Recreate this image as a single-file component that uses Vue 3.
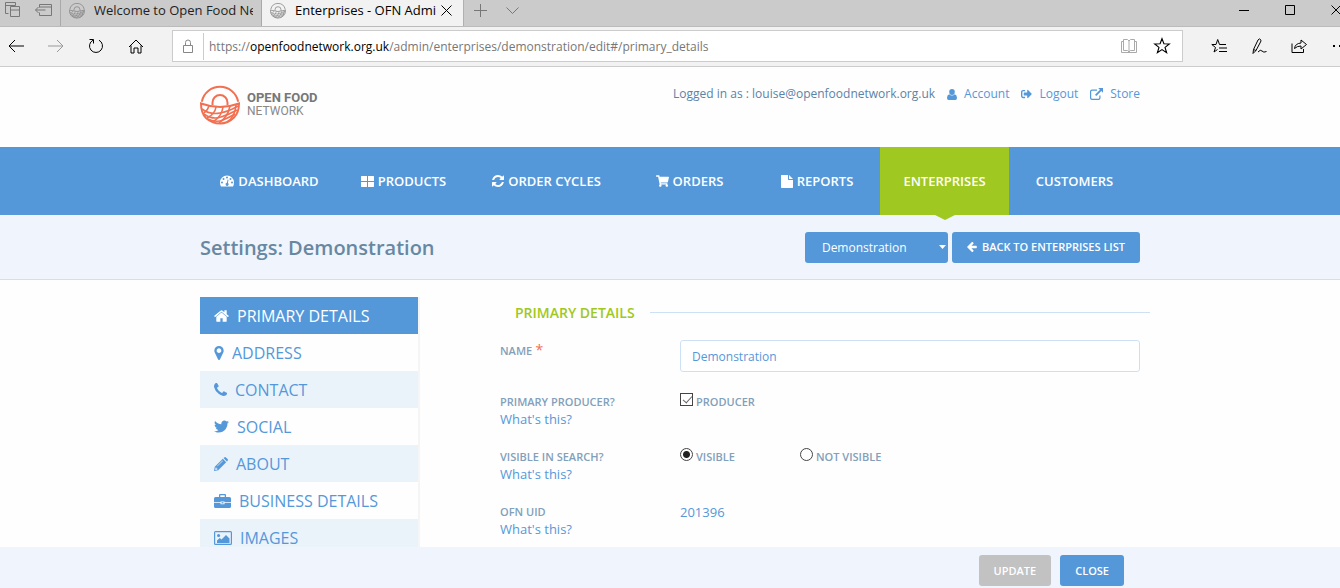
<script setup>
import { ref } from 'vue'

const P = {
  home: { w: 15, h: 12, box: '0 250 1664 1290', d: 'M1408 992v480q0 26-19 45t-45 19h-384v-384h-256v384h-384q-26 0-45-19t-19-45v-480q0-1 .5-3t.5-3l575-474 575 474q1 2 1 6zm223-69l-62 74q-8 9-21 11h-3q-13 0-21-7l-692-577-692 577q-12 8-24 7-13-2-21-11l-62-74q-8-10-7-23.500t11-21.500l719-599q32-26 76-26t76 26l244 204v-195q0-14 9-23t23-9h192q14 0 23 9t9 23v408l219 182q10 8 11 21.500t-7 23.500z' },
  marker: { w: 10, h: 14, box: '0 128 1024 1536', d: 'M768 640q0-106-75-181t-181-75-181 75-75 181 75 181 181 75 181-75 75-181zm256 0q0 109-33 179l-364 774q-16 33-47.500 52t-67.500 19-67.500-19-46.500-52l-365-774q-33-70-33-179 0-212 150-362t362-150 362 150 150 362z' },
  phone: { w: 13, h: 13, box: '0 128 1408 1408', d: 'M1408 1240q0 27-10 70.5t-21 68.500q-21 50-122 106-94 51-186 51-27 0-52.500-3.500t-57.500-12.500-47.500-14.500-55.500-20.500-49-18q-98-35-175-83-128-79-264.500-215.500t-215.500-264.500q-48-77-83-175-3-9-18-49t-20.500-55.500-14.500-47.500-12.500-57.500-3.500-52.500q0-92 51-186 56-101 106-122 25-11 68.500-21t70.500-10q14 0 21 3 18 6 53 76 11 19 30 54t35 63.500 31 53.500q3 4 17.500 25t21.500 35.500 7 28.500q0 20-28.500 50t-62 55-62 53-28.500 46q0 9 5 22.500t8.500 20.500 14 24 11.500 19q76 137 174 235t235 174q2 1 19 11.500t24 14 20.500 8.500 22.500 5q18 0 46-28.500t53-62 55-62 50-28.500q14 0 28.500 7t35.500 21.500 25 17.500q25 15 53.500 31t63.500 35 54 30q70 35 76 53 3 7 3 21z' },
  twitter: { w: 15, h: 13, box: '0 40 512 430', d: 'M459.37 151.716c.325 4.548.325 9.097.325 13.645 0 138.72-105.583 298.558-298.558 298.558-59.452 0-114.68-17.219-161.137-47.106 8.447.974 16.568 1.299 25.34 1.299 49.055 0 94.213-16.568 130.274-44.832-46.132-.975-84.792-31.188-98.112-72.772 6.498.974 12.995 1.624 19.818 1.624 9.421 0 18.843-1.3 27.614-3.573-48.081-9.747-84.143-51.98-84.143-102.985v-1.299c13.969 7.797 30.214 12.67 47.431 13.319-28.264-18.843-46.781-51.005-46.781-87.391 0-19.492 5.197-37.36 14.294-52.954 51.655 63.675 129.3 105.258 216.365 109.807-1.624-7.797-2.599-15.918-2.599-24.04 0-57.828 46.782-104.934 104.934-104.934 30.213 0 57.502 12.67 76.67 33.137 23.715-4.548 46.456-13.32 66.599-25.34-7.798 24.366-24.366 44.833-46.132 57.827 21.117-2.273 41.584-8.122 60.426-16.243-14.292 20.791-32.161 39.308-52.628 54.253z' },
  pencil: { w: 14, h: 14, box: '0 0 14 14', d: 'M8.800 1.800l3.400 3.400-8 8L0 14l.8-4.200zM9.500 1.100L10.300.4q.8-.7 1.600 0l1.700 1.700q.7.800 0 1.600l-.7.800zM1.600 10.500l-.4 2.200.2.200 2-.5v-.9h-1v-1zM8.500 3.500l-5.400 5.400.4.400 5.400-5.400z' },
  briefcase: { w: 17, h: 14, box: '0 0 17 14', d: 'M5 3V1q0-1 1-1h5q1 0 1 1v2h3.500Q17 3 17 4.500V8.300h-6.500V7.500h-4v.8H0V4.500Q0 3 1.500 3zM6.300 3h4.400V1.300H6.300zM0 9h6.500v1.300h4V9H17v3.500q0 1.500-1.500 1.500h-14Q0 14 0 12.500zM7.500 8.300h2v1.200h-2z' },
  image: { w: 18, h: 14, box: '0 0 18 14', d: 'M1.500 0h15Q18 0 18 1.500v11q0 1.500-1.500 1.500h-15Q0 14 0 12.500v-11Q0 0 1.500 0zM1.200 1.200v11.600h15.600V1.200zM3 12V9.500L5.800 7l1.700 1.600L12 4l3.500 3.600V12zM6.200 4.500a1.600 1.600 0 1 1-3.200 0 1.600 1.600 0 0 1 3.200 0z' },
  gauge: { w: 14, h: 12, box: '0 0 14 12', d: 'M7 .5a7 7 0 0 0-7 7q0 2.200 1 4h12q1-1.800 1-4a7 7 0 0 0-7-7zM7 1.500a1 1 0 1 1 0 2 1 1 0 0 1 0-2zM3.500 3a1 1 0 1 1 0 2 1 1 0 0 1 0-2zM2 6.500a1 1 0 1 1 0 2 1 1 0 0 1 0-2zM12 6.500a1 1 0 1 1 0 2 1 1 0 0 1 0-2zM10.500 3a1 1 0 1 1 0 2 1 1 0 0 1 0-2zM7.600 4.500l.9.200L7.900 8a1.500 1.500 0 1 1-1-.2z' },
  grid: { w: 13, h: 11, box: '0 0 13 11', d: 'M.5 0h5.500v5H0V.5zM7 0h5.500l.5.500V5H7zM0 6h6v5H.5l-.5-.5zM7 6h6v4.500l-.5.500H7z' },
  refresh: { w: 12, h: 12, box: '0 0 1536 1536', d: 'M1511 928q0 5-1 7-64 268-268 434.500t-478 166.500q-146 0-282.500-55t-243.500-157l-129 129q-19 19-45 19t-45-19-19-45v-448q0-26 19-45t45-19h448q26 0 45 19t19 45-19 45l-137 137q71 66 161 102t187 36q134 0 250-65t186-179q11-17 53-117 8-23 30-23h192q13 0 22.500 9.500t9.500 22.500zm25-800v448q0 26-19 45t-45 19h-448q-26 0-45-19t-19-45 19-45l138-138q-148-137-349-137-134 0-250 65t-186 179q-11 17-53 117-8 23-30 23h-199q-13 0-22.500-9.500t-9.500-22.500v-7q65-268 270-434.500t480-166.500q146 0 284 55.500t245 156.500l130-129q19-19 45-19t45 19 19 45z' },
  cart: { w: 13, h: 12, box: '0 0 576 512', d: 'M528.12 301.319l47.273-208C578.806 78.301 567.391 64 551.99 64H159.208l-9.166-44.81C147.758 8.021 137.930 0 126.529 0H24C10.745 0 0 10.745 0 24v16c0 13.255 10.745 24 24 24h69.883l70.248 343.435C147.325 417.100 136 435.222 136 456c0 30.928 25.072 56 56 56s56-25.072 56-56c0-15.674-6.447-29.835-16.824-40h209.647C430.447 426.165 424 440.326 424 456c0 30.928 25.072 56 56 56s56-25.072 56-56c0-22.172-12.888-41.332-31.579-50.405l5.517-24.276c3.413-15.018-8.002-29.319-23.403-29.319H218.117l-6.545-32h293.145c11.206 0 20.920-7.754 23.403-18.681z' },
  file: { w: 12, h: 13, box: '0 0 12 13', d: 'M.7 0H7v4.300q0 .7.700.7H12v7.300q0 .7-.7.700H.7Q0 13 0 12.300V.7Q0 0 .7 0zM8 0l4 4H8z' },
  arrow: { w: 10, h: 10, box: '0 32 1472 1536', d: 'M1472 736v128q0 53-32.500 90.500t-84.500 37.500h-704l293 294q38 36 38 90t-38 90l-75 76q-37 37-90 37-52 0-91-37l-651-652q-37-37-37-90 0-52 37-91l651-650q38-38 91-38 52 0 90 38l75 74q38 38 38 91t-38 91l-293 293h704q52 0 84.500 37.500t32.500 90.500z' },
  user: { w: 10, h: 11, box: '0 0 10 11', d: 'M5 0a2.800 2.800 0 0 1 2.800 2.800Q7.800 6 5 6T2.200 2.800A2.800 2.800 0 0 1 5 0zM2.200 5.200Q5 7.800 7.800 5.200 10 5.800 10 9q0 2-1.700 2H1.700Q0 11 0 9q0-3.200 2.200-3.800z' },
  signout: { w: 11, h: 10, box: '0 40 512 432', d: 'M497 273L329 441c-15 15-41 4.500-41-17v-96H152c-13.300 0-24-10.700-24-24v-96c0-13.300 10.700-24 24-24h136V88c0-21.400 25.900-32 41-17l168 168c9.300 9.400 9.300 24.600 0 34zM192 436v-40c0-6.600-5.400-12-12-12H96c-17.700 0-32-14.300-32-32V160c0-17.700 14.300-32 32-32h84c6.600 0 12-5.400 12-12V76c0-6.600-5.400-12-12-12H96c-53 0-96 43-96 96v192c0 53 43 96 96 96h84c6.600 0 12-5.400 12-12z' },
  external: { w: 13, h: 12, box: '0 0 13 12', d: 'M2 1.500h5v1.200H2.300q-1.100 0-1.100 1v6q0 1 1.100 1h6q1 0 1-1V7.500h1.200V10q0 2-2 2H2q-2 0-2-2V3.500q0-2 2-2zM8.200 0H13v4.800l-1.700-1.700-5 5-1.300-1.300 5-5z' }
}

const account = [
  { icon: P.user, label: 'Account' },
  { icon: P.signout, label: 'Logout' },
  { icon: P.external, label: 'Store' }
]
const nav = [
  { icon: P.gauge, label: 'Dashboard' },
  { icon: P.grid, label: 'Products' },
  { icon: P.refresh, label: 'Order Cycles' },
  { icon: P.cart, label: 'Orders' },
  { icon: P.file, label: 'Reports' },
  { label: 'Enterprises', active: true },
  { label: 'Customers' }
]
const sections = [
  { icon: P.home, label: 'Primary Details', active: true },
  { icon: P.marker, label: 'Address' },
  { icon: P.phone, label: 'Contact' },
  { icon: P.twitter, label: 'Social' },
  { icon: P.pencil, label: 'About' },
  { icon: P.briefcase, label: 'Business Details' },
  { icon: P.image, label: 'Images' }
]
const name = ref('Demonstration')
const producer = ref(true)
const visible = ref('yes')
</script>

<template>
  <div class="window">
    <svg class="defs" width="0" height="0" aria-hidden="true">
      <symbol id="basket" viewBox="0 0 40 41">
        <g fill="none" stroke="currentColor" stroke-width="2">
          <path d="M2 17A18.500 18.500 0 0 1 38 17" stroke-linecap="round" />
          <path d="M12.500 21v-2.500a7.500 7.500 0 0 1 15 0V21" />
          <path d="M1 19.500q19 7 38 0 0 9-5 14-6 6-14 6T6 34Q1 29 1 19.500z" />
        </g>
        <g fill="none" stroke="currentColor" stroke-width="1.600">
          <path d="M2 25q8 6 18 4t18-7M4 30q8 6 17 3t16-7M8 35q8 4 15 1t12-6" />
          <path d="M9 22q-1 4-5 7M16 23q-1 7-9 11M23 23q-1 9-10 15M30 22q-2 11-11 17M36 21q-1 12-9 17" />
        </g>
      </symbol>
    </svg>

    <div class="tabs">
      <button class="tool" aria-label="Tabs set aside">
        <svg width="16" height="16" viewBox="0 0 16 16"><path d="M3.500 11.500h-3V.5h10v3M.5 3.500h10M5.500 4.500h9v10h-9zM5.500 8h9" /></svg>
      </button>
      <button class="tool" aria-label="Set tabs aside">
        <svg width="17" height="12" viewBox="0 0 17 12"><path d="M4.500 3.500V.5h12v11h-12v-3M4.500 3h12M.5 6h10M3.500 3l-3 3 3 3" /></svg>
      </button>
      <div class="tab">
        <svg class="fav" width="16" height="17"><use href="#basket" /></svg>
        <span>Welcome to Open Food Net</span>
      </div>
      <div class="tab on">
        <svg class="fav" width="16" height="17"><use href="#basket" /></svg>
        <span>Enterprises - OFN Admi</span>
        <button class="x" aria-label="Close tab"><svg width="11" height="11" viewBox="0 0 11 11"><path d="M.5.5l10 10M10.500.5l-10 10" /></svg></button>
      </div>
      <button class="tool" aria-label="New tab"><svg width="13" height="13" viewBox="0 0 13 13"><path d="M6.500 0v13M0 6.500h13" /></svg></button>
      <button class="tool" aria-label="Tab previews"><svg width="13" height="7" viewBox="0 0 13 7"><path d="M.5.5l6 6 6-6" /></svg></button>
      <div class="controls">
        <button aria-label="Minimise"><svg width="10" height="10" viewBox="0 0 10 10"><path d="M0 5.500h10" /></svg></button>
        <button aria-label="Maximise"><svg width="10" height="10" viewBox="0 0 10 10"><path d="M.5.5h9v9h-9z" /></svg></button>
        <button class="edge" aria-label="Close window"><svg width="10" height="10" viewBox="0 0 10 10"><path d="M.5.5l9 9M9.500.5l-9 9" /></svg></button>
      </div>
    </div>

    <div class="toolbar">
      <div class="moves">
        <button aria-label="Back"><svg width="16" height="14" viewBox="0 0 16 14"><path d="M1 7h15M7 1L1 7l6 6" /></svg></button>
        <button class="dim" aria-label="Forward"><svg width="16" height="14" viewBox="0 0 16 14"><path d="M0 7h15M9 1l6 6-6 6" /></svg></button>
        <button aria-label="Refresh"><svg width="16" height="16" viewBox="0 0 16 16"><path d="M5 2.200A6.500 6.500 0 1 0 11 2.200M1.500 1.500H5.500V5.500" /></svg></button>
        <button aria-label="Home"><svg width="16" height="15" viewBox="0 0 16 15"><path d="M1 8l7-7 7 7M3 6.500v7.500h3V9h4v5h3V6.500" /></svg></button>
      </div>
      <div class="address">
        <svg class="lock" width="12" height="15" viewBox="0 0 12 15"><path d="M1.500 6.500h9v7h-9zM3.500 6V3.500a2.500 2.500 0 0 1 5 0V6" /></svg>
        <span class="url">https://<b>openfoodnetwork.org.uk</b>/admin/enterprises/demonstration/edit#/primary_details</span>
        <button class="book" aria-label="Reading view"><svg width="16" height="14" viewBox="0 0 16 14"><path d="M2.500.5h4L8 2l1.500-1.500h4v11h-4L8 13l-1.500-1.500h-4zM8 2v11M2 2.500H.5v11h15v-11H14" /></svg></button>
        <button aria-label="Add to favourites"><svg width="18" height="18" viewBox="0 0 16 16"><path d="M8 1.500l1.700 4.500 4.800.2-3.800 3 1.400 4.800L8 11.200 3.900 14l1.400-4.800-3.800-3L6.300 6z" /></svg></button>
      </div>
      <div class="actions">
        <button aria-label="Hub"><svg width="17" height="16" viewBox="0 0 17 16"><path d="M15 6.500H8.500L6.700 1.500 5 6.500H.8L4.500 9.500 3 14l3.500-2.500M8 10h8M8 13.500h8" /></svg></button>
        <button aria-label="Make a note"><svg width="17" height="17" viewBox="0 0 17 17"><path d="M2 15.500l.5-4L7 2q1.500-2 2.500-.5T9.500 4L5 12.500zM2.500 11.500L5 12.500M7 14q2.500-3 4-1t4.500.5" /></svg></button>
        <button aria-label="Share"><svg width="17" height="14" viewBox="0 0 17 14"><path d="M1 4.500v9h11.500V10M3.500 9.500Q4 4.500 10 4V1l5.500 4.500L10 10V7Q6 7 3.500 9.500z" /></svg></button>
        <button class="edge" aria-label="More"><svg width="14" height="3" viewBox="0 0 14 3"><path class="dots" d="M0 0h2v2H0zM6 0h2v2H6zM12 0h2v2h-2z" /></svg></button>
      </div>
    </div>

    <header class="inner head">
      <a class="logo" href="#" aria-label="Open Food Network">
        <svg width="40" height="41"><use href="#basket" /></svg>
        <span><b>OPEN FOOD</b><br />NETWORK</span>
      </a>
      <div class="account">
        <span>Logged in as : louise@openfoodnetwork.org.uk</span>
        <a v-for="a in account" :key="a.label" href="#">
          <svg :width="a.icon.w" :height="a.icon.h" :viewBox="a.icon.box"><path fill-rule="evenodd" :d="a.icon.d" /></svg>{{ a.label }}
        </a>
      </div>
    </header>

    <nav class="nav">
      <div class="inner items">
        <a v-for="n in nav" :key="n.label" href="#" :class="{ active: n.active }">
          <svg v-if="n.icon" :width="n.icon.w" :height="n.icon.h" :viewBox="n.icon.box"><path fill-rule="evenodd" :d="n.icon.d" /></svg>{{ n.label }}
        </a>
      </div>
    </nav>

    <div class="titlebar">
      <div class="inner">
        <h1>Settings: Demonstration</h1>
        <div class="picker">
          <select aria-label="Enterprise"><option>Demonstration</option></select>
          <svg width="7" height="4" viewBox="0 0 7 4"><path d="M0 0h7L3.500 4z" /></svg>
        </div>
        <button class="btn"><svg :width="P.arrow.w" :height="P.arrow.h" :viewBox="P.arrow.box"><path :d="P.arrow.d" /></svg>Back to enterprises list</button>
      </div>
    </div>

    <main class="content">
      <div class="inner columns">
        <div class="side">
          <a v-for="s in sections" :key="s.label" href="#" :class="{ active: s.active }">
            <svg :width="s.icon.w" :height="s.icon.h" :viewBox="s.icon.box"><path fill-rule="evenodd" :d="s.icon.d" /></svg>{{ s.label }}
          </a>
        </div>
        <form class="form" @submit.prevent>
          <h2>Primary Details</h2>
          <div class="row first">
            <div><label for="name">Name</label> <span class="star">*</span></div>
            <input id="name" v-model="name" class="text" type="text" />
          </div>
          <div class="row">
            <div><span class="lbl">Primary Producer?</span><a href="#">What's this?</a></div>
            <div class="opts"><label><input v-model="producer" type="checkbox" />Producer</label></div>
          </div>
          <div class="row">
            <div><span class="lbl">Visible in search?</span><a href="#">What's this?</a></div>
            <div class="opts">
              <label><input v-model="visible" type="radio" name="visible" value="yes" />Visible</label>
              <label><input v-model="visible" type="radio" name="visible" value="no" />Not Visible</label>
            </div>
          </div>
          <div class="row">
            <div><span class="lbl">OFN UID</span><a href="#">What's this?</a></div>
            <div class="value">201396</div>
          </div>
        </form>
      </div>
    </main>

    <footer class="savebar">
      <div class="inner">
        <button class="btn off" disabled>Update</button>
        <button class="btn">Close</button>
      </div>
    </footer>
  </div>
</template>

<style>
body { margin: 0; }
</style>

<style scoped>
.window { display: flex; flex-direction: column; height: 100vh; overflow: hidden; background: #fefefe; color: #5498da; font: 13px/18px "Open Sans", "Noto Sans", sans-serif; }
.window * { box-sizing: border-box; }
.defs { position: absolute; }
a { color: inherit; text-decoration: none; }
button { border: 0; padding: 0; background: none; font: inherit; color: inherit; }
svg { display: block; flex: none; }
svg path { fill: currentColor; }
svg g path { fill: none; }
.inner { width: 100%; max-width: 960px; margin: 0 auto; padding: 0 10px; }

/* Browser frame */
.tabs, .toolbar { display: flex; flex: none; align-items: center; }
.tabs path, .toolbar path { fill: none; stroke: currentColor; }
.tabs { height: 26px; background: #cbcbcb; color: #777; }
.tabs .tool { display: flex; flex: none; justify-content: center; width: 32px; height: 20px; align-items: center; margin-bottom: 6px; }
.tabs .tool:nth-of-type(1) { width: 26px; }
.tabs .tool:nth-of-type(2) { width: 34px; }
.tab { display: flex; align-items: center; flex: 0 1 201px; min-width: 0; height: 26px; padding: 0 8px 6px; border-left: 1px solid #a9a9a9; color: #222; gap: 3px; }
.tab span { flex: 1; min-width: 0; overflow: hidden; white-space: nowrap; font-size: 13px; line-height: 20px; }
.tab.on { flex-basis: 203px; background: #f2f2f2; border-right: 1px solid #b0b0b0; color: #000; padding-right: 11px; }
.tab .fav { color: #888; margin-right: 6px; }
.controls { display: flex; margin-left: auto; color: #000; padding-bottom: 6px; }
.controls button { display: flex; justify-content: center; width: 46px; }
.controls .edge { width: 27px; justify-content: flex-start; padding-left: 18px; overflow: hidden; }
.toolbar { height: 41px; background: #f2f2f2; border-top: 1px solid #bbb; border-bottom: 1px solid #ccc; color: #000; padding-bottom: 1px; }
.moves { display: flex; margin-left: -4px; }
.moves button, .actions button { display: flex; justify-content: center; align-items: center; width: 40px; height: 20px; }
.moves .dim { color: #999; }
.address { display: flex; align-items: center; flex: 1; min-width: 0; height: 32px; margin: 0 16px; padding: 0 11px 0 9px; background: #fff; border: 1px solid #ccc; }
.lock { color: #888; }
.url { flex: 1; min-width: 0; margin-left: 9px; padding: 1px 0 0 5px; border-left: 1px solid #ccc; line-height: 26px; overflow: hidden; white-space: nowrap; font-size: 12px; color: #777; }
.url b { font-weight: 400; color: #000; }
.address button { margin-left: 16px; }
.address .book { color: #aaa; }
.actions { display: flex; }
.actions .edge { width: 21px; justify-content: flex-start; padding-left: 14px; overflow: hidden; }
.actions .dots { fill: #000; stroke: none; }

/* Header */
.head { display: flex; flex: none; justify-content: space-between; height: 80px; }
.logo { display: flex; align-items: center; gap: 7px; height: 75px; color: #f27052; }
.logo span { color: #888; font: 12px/13px "Roboto", sans-serif; }
.logo b { color: #777; font-size: 13px; }
.account { display: flex; align-items: center; height: 54px; gap: 12px; color: #5a83a8; font-size: 12px; }
.account a { display: flex; align-items: center; gap: 7px; color: #5498da; }

.nav { flex: none; background: #5498da; color: #fff; }
.items { display: grid; grid-template-columns: 139fr 129fr 157fr 129fr 126fr 129fr 131fr; }
.items a { position: relative; display: flex; align-items: center; justify-content: center; gap: 4px; height: 68px; font-size: 13px; font-weight: 600; text-transform: uppercase; white-space: nowrap; }
.items .active { background: #9fc820; }
.items .active::after { content: ""; position: absolute; top: 100%; left: 50%; margin-left: -10px; border: 10px solid transparent; border-top: 5px solid #9fc820; border-bottom: 0; z-index: 1; }

.titlebar { flex: none; background: #f0f4fc; border-bottom: 1px solid #cee1f4; }
.titlebar .inner { display: flex; align-items: center; gap: 4px; height: 64px; }
h1 { flex: 1; margin: 0; padding-top: 2px; font-size: 20px; line-height: 28px; font-weight: 600; color: #6788a2; }
.picker { position: relative; width: 143px; }
.picker select { appearance: none; display: block; width: 100%; height: 31px; padding: 0 17px; border: 0; border-radius: 3px; background: #5498da; color: #fff; font: 12px "Open Sans", sans-serif; }
.picker svg { position: absolute; right: 2px; top: 13px; color: #fff; }
.btn { display: flex; align-items: center; gap: 5px; height: 31px; padding: 0 15px; border-radius: 3px; background: #5498da; color: #fff; font-size: 11px; font-weight: 600; text-transform: uppercase; }
.btn.off { background: #c2c2c2; }

/* Content */
.content { flex: 1; min-height: 0; overflow: hidden; }
.columns { display: flex; padding: 17px 0 0 10px; }
.side { flex: none; width: 220px; border-right: 2px solid #f5f5f5; }
.side a { display: flex; align-items: center; gap: 8px; height: 37px; padding: 0 14px; font-size: 16px; line-height: 24px; text-transform: uppercase; }
.side a:nth-child(odd) { background: #eaf3fa; }
.side a.active { background: #5498da; color: #fff; }
.form { flex: 1; margin-left: 80px; }
h2 { display: flex; align-items: center; gap: 15px; margin: 6px 0 17px; padding-left: 15px; font-size: 14px; line-height: 20px; font-weight: 600; text-transform: uppercase; color: #9fc820; }
h2::after { content: ""; flex: 1; height: 1px; margin-bottom: 2px; background: #cee1f4; }
.row { display: grid; grid-template-columns: 180px 1fr; align-items: start; margin: 0 10px 19px 0; }
.row > div { padding-top: 1px; }
.first { min-height: 33px; }
.row a { display: block; }
.lbl, label { font-size: 11px; font-weight: 600; text-transform: uppercase; color: #82a0ba; }
.lbl { display: block; line-height: 17px; }
.star { color: #f27052; font-size: 14px; line-height: 16px; }
.text { width: 100%; height: 32px; padding: 0 11px; border: 1px solid #cee1f4; border-radius: 3px; background: #fff; color: #5498da; font: 12px "Open Sans", sans-serif; }
.opts { display: flex; }
.opts label { display: flex; width: 120px; gap: 3px; white-space: nowrap; }
.opts input { appearance: none; flex: none; width: 13px; height: 13px; margin: 0; border: 1px solid #444; background: #fff; }
.opts [type="radio"] { border-radius: 50%; }
.opts [type="radio"]:checked { background: radial-gradient(circle, #222 3px, #fff 4px); }
.opts [type="checkbox"]:checked::after { content: ""; display: block; width: 4px; height: 8px; margin: 0 0 0 4px; border: solid #666; border-width: 0 1px 1px 0; transform: rotate(42deg); }
.savebar { flex: none; background: #f0f4fc; }
.savebar .inner { display: flex; justify-content: flex-end; gap: 9px; padding: 8px 26px 2px; }
</style>
